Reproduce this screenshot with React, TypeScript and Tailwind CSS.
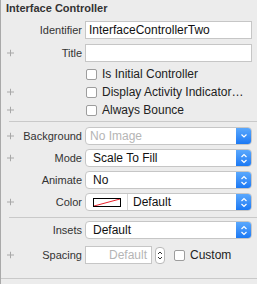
import React from "react";

const Plus = () => (
  <svg className="absolute left-[6px] top-1/2 -translate-y-1/2" width="7" height="7" viewBox="0 0 7 7">
    <path d="M3.5 0 V7 M0 3.5 H7" stroke="#a8a8a8" strokeWidth="1" />
  </svg>
);

const Label: React.FC<{ text: string; plus?: boolean }> = ({ text, plus }) => (
  <div className="relative w-[84px] shrink-0 h-full flex items-center justify-end pr-[3px] text-[11px] text-[#333]">
    {plus && <Plus />}
    <span>{text}</span>
  </div>
);

const UpDown = () => (
  <svg width="8" height="11" viewBox="0 0 8 11" fill="none">
    <path d="M1.5 4 L4 1.5 L6.5 4" stroke="white" strokeWidth="1.2" />
    <path d="M1.5 7 L4 9.5 L6.5 7" stroke="white" strokeWidth="1.2" />
  </svg>
);

const Down = () => (
  <svg width="8" height="6" viewBox="0 0 8 6" fill="none">
    <path d="M1.5 1.5 L4 4 L6.5 1.5" stroke="white" strokeWidth="1.2" />
  </svg>
);

const Popup: React.FC<{ children: React.ReactNode; pulldown?: boolean }> = ({ children, pulldown }) => (
  <div className="flex w-[167px] h-[18px] rounded-[4px] border border-[#c6c6c6] bg-white overflow-hidden">
    <div className="flex-1 flex items-center min-w-0">{children}</div>
    <div className="w-[15px] flex items-center justify-center bg-gradient-to-b from-[#5aa8fd] to-[#1a79f4]">
      {pulldown ? <Down /> : <UpDown />}
    </div>
  </div>
);

const Check: React.FC<{ text: string; plus?: boolean }> = ({ text, plus }) => (
  <div className="relative h-[18px] flex items-center">
    {plus && <Plus />}
    <div className="ml-[85px] w-[11px] h-[11px] rounded-[2px] border border-[#9d9d9d] bg-white" />
    <span className="ml-[5px] text-[12px] text-[#222]">{text}</span>
  </div>
);

export default function App() {
  return (
    <div
      className="w-[257px] h-[284px] bg-[#ececec] border-l border-[#a9a9a9] overflow-hidden"
      style={{ fontFamily: '"Liberation Sans", Arial, sans-serif' }}
    >
      <div className="pl-[5px] pt-[1px] h-[21px] text-[11px] leading-[14px] font-bold text-[#333]">
        Interface Controller
      </div>

      <div className="flex h-[18px]">
        <Label text="Identifier" />
        <div className="w-[167px] h-[18px] border border-[#c6c6c6] bg-white flex items-center pl-[3px] text-[12px] text-[#111]">
          InterfaceControllerTwo
        </div>
      </div>

      <div className="flex h-[18px] mt-[5px]">
        <Label text="Title" plus />
        <div className="w-[167px] h-[18px] border border-[#c6c6c6] bg-white" />
      </div>

      <div className="mt-[3px]">
        <Check text="Is Initial Controller" />
        <Check text="Display Activity Indicator…" plus />
        <Check text="Always Bounce" plus />
      </div>

      <div className="mt-[2px] ml-[8px] h-px bg-[#c9c9c9]" />

      <div className="flex h-[18px] mt-[5px]">
        <Label text="Background" plus />
        <Popup pulldown>
          <span className="pl-[4px] text-[12px] text-[#b5b5b5]">No Image</span>
        </Popup>
      </div>

      <div className="flex h-[18px] mt-[4px]">
        <Label text="Mode" plus />
        <Popup>
          <span className="pl-[7px] text-[12px] text-[#111]">Scale To Fill</span>
        </Popup>
      </div>

      <div className="flex h-[18px] mt-[4px]">
        <Label text="Animate" />
        <Popup>
          <span className="pl-[7px] text-[12px] text-[#111]">No</span>
        </Popup>
      </div>

      <div className="flex h-[18px] mt-[4px]">
        <Label text="Color" plus />
        <Popup>
          <div className="flex items-center h-full">
            <div className="ml-[7px] w-[28px] h-[9px] border border-black bg-white relative">
              <svg className="absolute inset-0" width="26" height="7" viewBox="0 0 26 7" preserveAspectRatio="none">
                <line x1="0" y1="7" x2="26" y2="0" stroke="#e8212b" strokeWidth="1" />
              </svg>
            </div>
            <div className="ml-[6px] w-px h-full bg-[#d6d6d6]" />
            <span className="pl-[5px] text-[12px] text-[#111]">Default</span>
          </div>
        </Popup>
      </div>

      <div className="mt-[6px] ml-[8px] h-px bg-[#c9c9c9]" />

      <div className="flex h-[18px] mt-[3px]">
        <Label text="Insets" />
        <Popup>
          <span className="pl-[7px] text-[12px] text-[#111]">Default</span>
        </Popup>
      </div>

      <div className="flex h-[18px] mt-[7px] items-center">
        <Label text="Spacing" plus />
        <div className="w-[67px] h-[18px] border border-[#c6c6c6] bg-white flex items-center justify-end pr-[4px] text-[12px] text-[#b5b5b5]">
          Default
        </div>
        <div className="ml-[3px] w-[10px] h-[17px] rounded-[4px] border border-[#b9b9b9] bg-white flex items-center justify-center">
          <svg width="6" height="11" viewBox="0 0 6 11" fill="none">
            <path d="M1 4 L3 2 L5 4" stroke="#333" strokeWidth="1" />
            <path d="M1 7 L3 9 L5 7" stroke="#333" strokeWidth="1" />
          </svg>
        </div>
        <div className="ml-[9px] w-[11px] h-[11px] rounded-[2px] border border-[#9d9d9d] bg-white" />
        <span className="ml-[5px] text-[12px] text-[#222]">Custom</span>
      </div>

      <div className="mt-[14px] h-px bg-[#c9c9c9]" />
    </div>
  );
}
